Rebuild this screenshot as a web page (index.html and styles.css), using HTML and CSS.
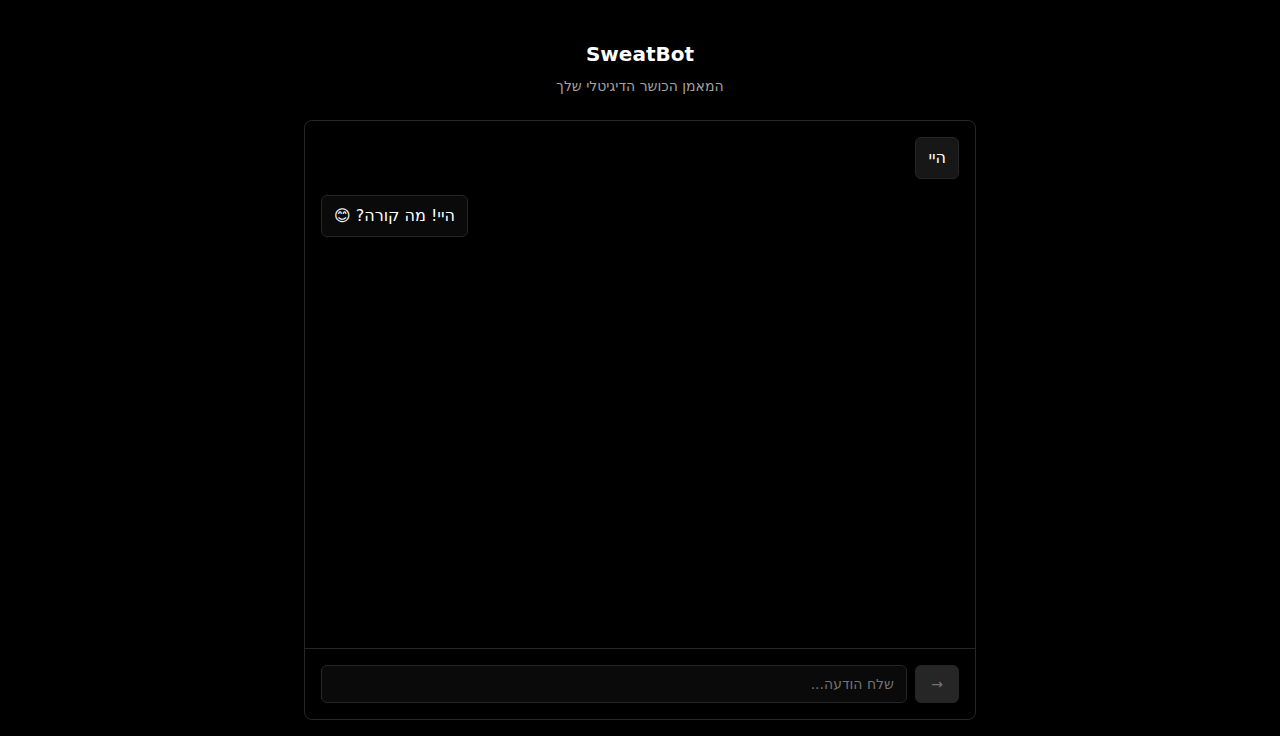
FILE: index.html
```html
<!DOCTYPE html>
<html lang="he" dir="rtl">
<head>
<meta charset="utf-8">
<meta name="viewport" content="width=device-width, initial-scale=1">
<title>SweatBot</title>
<link rel="stylesheet" href="styles.css">
</head>
<body>
<div class="app">
  <header class="header">
    <h1 class="title">SweatBot</h1>
    <p class="subtitle">המאמן הכושר הדיגיטלי שלך</p>
  </header>
  <main class="chat">
    <div class="messages">
      <div class="message message-user">היי</div>
      <div class="message message-bot">היי! מה קורה? 😊</div>
    </div>
    <form class="composer">
      <button class="send" type="submit" aria-label="שלח" disabled>→</button>
      <input class="field" type="text" aria-label="הודעה" placeholder="שלח הודעה...">
    </form>
  </main>
</div>
</body>
</html>
```

FILE: styles.css
```css
* { box-sizing: border-box; }

body {
  margin: 0;
  background: #000;
  color: #fff;
  font-family: "DejaVu Sans", sans-serif;
  font-size: 16px;
  line-height: 24px;
}

.app {
  display: flex;
  flex-direction: column;
  max-width: 704px;
  height: 100vh;
  margin: 0 auto;
  padding: 16px;
}

.header {
  padding: 24px 0;
  text-align: center;
}

.title {
  margin: 0 0 8px;
  font-size: 20px;
  font-weight: 700;
  line-height: 28px;
}

.subtitle {
  margin: 0;
  color: #a3a3a3;
  font-size: 14px;
  line-height: 20px;
}

.chat {
  display: flex;
  flex: 1;
  flex-direction: column;
  min-height: 0;
  border: 1px solid #262626;
  border-radius: 8px;
}

.messages {
  display: flex;
  flex: 1;
  flex-direction: column;
  gap: 16px;
  padding: 16px;
  overflow-y: auto;
}

.message {
  max-width: 80%;
  padding: 8px 12px;
  border: 1px solid #262626;
  border-radius: 6px;
}

.message-user {
  align-self: flex-start;
  background: #171717;
}

.message-bot {
  align-self: flex-end;
  background: #0a0a0a;
}

.composer {
  display: flex;
  gap: 8px;
  padding: 16px;
  border-top: 1px solid #262626;
}

.field,
.send {
  height: 38px;
  border: 1px solid #262626;
  border-radius: 6px;
  font-family: inherit;
  font-size: 14px;
}

.field {
  flex: 1;
  min-width: 0;
  padding: 8px 12px;
  background: #0a0a0a;
  color: #fff;
}

.field::placeholder { color: #737373; }

.send {
  width: 44px;
  padding: 0;
  background: #262626;
  color: #737373;
}
```
